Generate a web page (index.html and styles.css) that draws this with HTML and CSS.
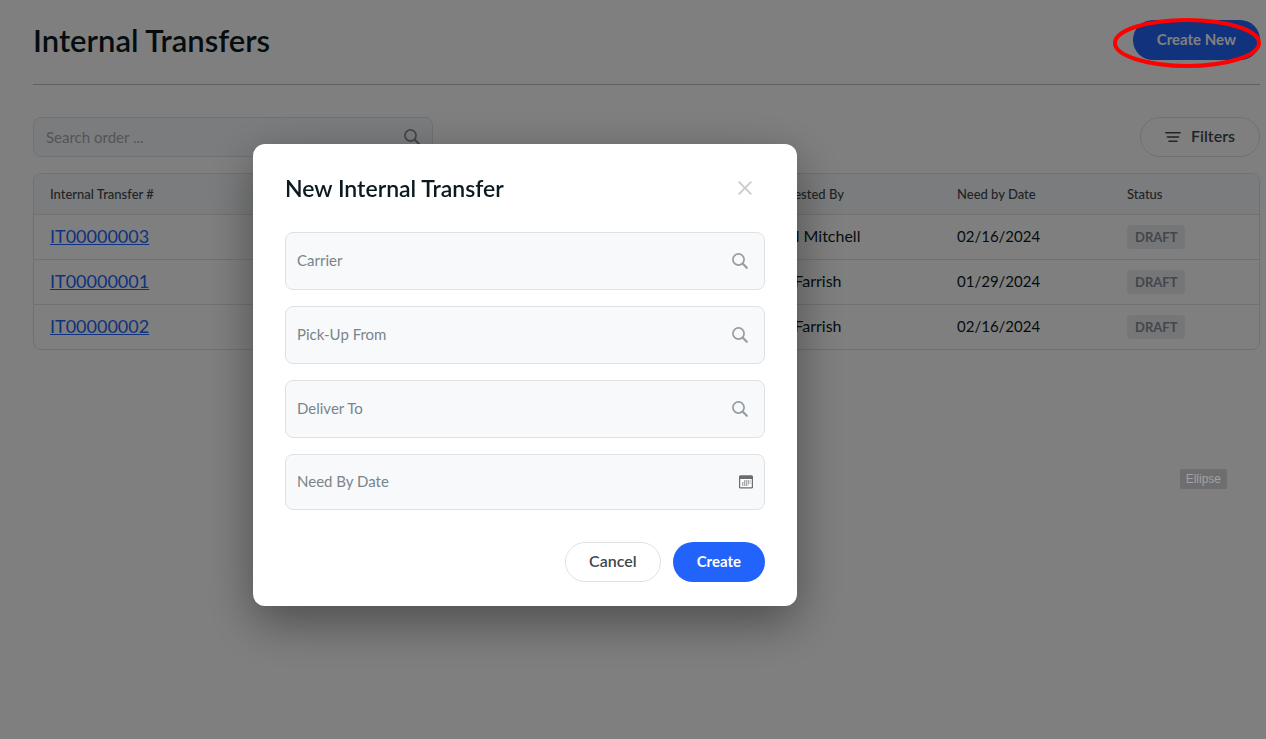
FILE: index.html
```
<!DOCTYPE html>
<html lang="en">
<head>
    <meta charset="UTF-8">
    <meta name="viewport" content="width=device-width, initial-scale=1.0">
    <title>Internal Transfers</title>
    <link rel="stylesheet" href="styles.css">
</head>
<body>
    <svg class="sprite" aria-hidden="true">
        <symbol id="icon-search" viewBox="0 0 16 16">
            <circle cx="6.5" cy="6.5" r="5.6" fill="none" stroke="currentColor" stroke-width="1.7"/>
            <path d="M10.8 10.8L14.8 14.8" fill="none" stroke="currentColor" stroke-width="2.2" stroke-linecap="round"/>
        </symbol>
    </svg>

    <main class="page">
        <header class="page-header">
            <h1>Internal Transfers</h1>
            <button class="btn btn-primary">Create New</button>
        </header>

        <div class="toolbar">
            <div class="search">
                <input type="text" placeholder="Search order ..." aria-label="Search order">
                <svg class="icon"><use href="#icon-search"/></svg>
            </div>
            <button class="btn btn-outline">
                <svg class="icon" viewBox="0 0 16 16" fill="none" stroke="currentColor" stroke-width="1.5" stroke-linecap="round">
                    <path d="M.8 4.8H15.2M2.4 9H13.6M4 13.2H12"/>
                </svg>
                Filters
            </button>
        </div>

        <div class="table-wrap">
            <table>
                <colgroup>
                    <col class="col-number">
                    <col class="col-requested">
                    <col class="col-date">
                    <col class="col-status">
                </colgroup>
                <thead>
                    <tr>
                        <th>Internal Transfer #</th>
                        <th>Requested By</th>
                        <th>Need by Date</th>
                        <th>Status</th>
                    </tr>
                </thead>
                <tbody>
                    <tr>
                        <td><a href="#">IT00000003</a></td>
                        <td>Todd Mitchell</td>
                        <td class="date">02/16/2024</td>
                        <td><span class="badge">DRAFT</span></td>
                    </tr>
                    <tr>
                        <td><a href="#">IT00000001</a></td>
                        <td>Jeff Farrish</td>
                        <td class="date">01/29/2024</td>
                        <td><span class="badge">DRAFT</span></td>
                    </tr>
                    <tr>
                        <td><a href="#">IT00000002</a></td>
                        <td>Jeff Farrish</td>
                        <td class="date">02/16/2024</td>
                        <td><span class="badge">DRAFT</span></td>
                    </tr>
                </tbody>
            </table>
        </div>
    </main>

    <div class="overlay">
        <form class="modal" role="dialog" aria-labelledby="modal-title">
            <div class="modal-header">
                <h2 id="modal-title">New Internal Transfer</h2>
                <button type="button" class="close" aria-label="Close">
                    <svg width="14" height="14" viewBox="0 0 14 14" stroke="currentColor" stroke-width="1.8">
                        <path d="M.7 .7L13.3 13.3M13.3 .7L.7 13.3"/>
                    </svg>
                </button>
            </div>

            <div class="fields">
                <div class="field">
                    <label for="carrier">Carrier</label>
                    <input type="text" id="carrier">
                    <svg class="icon"><use href="#icon-search"/></svg>
                </div>
                <div class="field">
                    <label for="pickup">Pick-Up From</label>
                    <input type="text" id="pickup">
                    <svg class="icon"><use href="#icon-search"/></svg>
                </div>
                <div class="field">
                    <label for="deliver">Deliver To</label>
                    <input type="text" id="deliver">
                    <svg class="icon"><use href="#icon-search"/></svg>
                </div>
                <div class="field field-date">
                    <label for="need-by">Need By Date</label>
                    <input type="text" id="need-by">
                    <svg class="icon-calendar" viewBox="0 0 14 14">
                        <rect x=".6" y="1.1" width="12.8" height="11.8" rx="1" fill="#fff" stroke="#6b6b70" stroke-width="1.3"/>
                        <path d="M0 2a1.5 1.5 0 0 1 1.5-1.5h11A1.5 1.5 0 0 1 14 2v2H0z" fill="#6b6b70"/>
                        <path d="M5 6H11.4M3 8H11.4M3 10H9.4" stroke="#8f8f94" stroke-width="1.3" stroke-dasharray="1.4 .6"/>
                    </svg>
                </div>
            </div>

            <div class="modal-footer">
                <button type="button" class="btn btn-outline">Cancel</button>
                <button type="submit" class="btn btn-primary">Create</button>
            </div>
        </form>
    </div>

    <svg class="marker" viewBox="0 0 148 50" aria-hidden="true">
        <ellipse cx="74" cy="25" rx="72" ry="23" fill="none" stroke="#ff0000" stroke-width="4"/>
    </svg>
    <span class="tooltip">Ellipse</span>
</body>
</html>
```

FILE: styles.css
```
* {
    box-sizing: border-box;
}

body {
    margin: 0;
    min-height: 100vh;
    position: relative;
    background-color: #fff;
    color: #0b1a20;
    font-family: Lato, "Liberation Sans", sans-serif;
    font-size: 16px;
    line-height: 24px;
}

h1, h2 {
    margin: 0;
    font-weight: 600;
}

h1 {
    font-size: 31px;
    line-height: 40px;
}

h2 {
    font-size: 23px;
    line-height: 32px;
}

input {
    min-width: 0;
    flex: 1;
    border: none;
    outline: none;
    padding: 0;
    background: none;
    font: inherit;
    color: inherit;
}

.sprite {
    display: none;
}

.icon {
    width: 16px;
    height: 16px;
    flex: none;
}

.page {
    padding: 20px 6px 0 33px;
}

.page-header {
    display: flex;
    justify-content: space-between;
    align-items: center;
    padding-bottom: 24px;
    border-bottom: 1px solid #c0c3d0;
}

/* buttons */
.btn {
    display: inline-flex;
    align-items: center;
    justify-content: center;
    gap: 10px;
    height: 40px;
    padding: 0 24px 2px;
    border: none;
    border-radius: 20px;
    font: inherit;
    cursor: pointer;
}

.btn-primary {
    background-color: #2264fb;
    color: #fff;
    font-size: 15px;
    font-weight: 700;
}

.btn-outline {
    background-color: #fff;
    border: 1px solid #dee2e4;
    color: #40484e;
    font-weight: 600;
}

.modal-footer .btn-outline {
    padding: 0 23px 2px;
}

.toolbar {
    display: flex;
    justify-content: space-between;
    margin: 32px 0 16px;
}

.search {
    display: flex;
    align-items: center;
    width: 400px;
    height: 40px;
    padding: 0 12px;
    background-color: #f7f9fb;
    border: 1px solid #dee2e6;
    border-radius: 8px;
    color: #868e94;
    font-size: 15px;
}

.search input::placeholder {
    color: #a4abb0;
    opacity: 1;
}

/* transfers table */
.table-wrap {
    border: 1px solid #dee2e4;
    border-radius: 8px;
    overflow: hidden;
}

table {
    width: 100%;
    table-layout: fixed;
    border-collapse: separate;
    border-spacing: 0;
}

.col-requested {
    width: 192px;
}

.col-date {
    width: 170px;
}

.col-status {
    width: 148px;
}

th, td {
    padding: 0 16px;
    text-align: left;
    white-space: nowrap;
}

th {
    height: 41px;
    background-color: #f7f9fb;
    border-bottom: 1px solid #dee2e4;
    font-size: 13px;
    font-weight: 500;
    color: #40484e;
}

td {
    height: 45px;
    padding-bottom: 2px;
    border-bottom: 1px solid #dee2e4;
}

tr:last-child td {
    height: 44px;
    border-bottom: none;
}

td a {
    color: #2264fb;
    font-size: 18px;
    text-decoration-thickness: 1px;
}

.date {
    font-size: 15px;
}

.badge {
    display: inline-block;
    padding: 0 8px;
    background-color: #e9edf0;
    border-radius: 4px;
    color: #868e94;
    font-size: 13px;
    font-weight: 700;
}

.overlay {
    position: fixed;
    inset: 0;
    display: flex;
    justify-content: center;
    align-items: flex-start;
    padding: 144px 216px 0 0;
    background-color: rgba(0, 0, 0, 0.5);
}

.modal {
    width: 544px;
    padding: 24px 32px;
    background-color: #fff;
    border-radius: 12px;
    box-shadow: 0 16px 48px rgba(0, 0, 0, 0.4);
}

.modal-header {
    display: flex;
    justify-content: space-between;
    align-items: center;
    height: 40px;
    padding-right: 8px;
}

.close {
    display: flex;
    align-items: center;
    justify-content: center;
    width: 24px;
    height: 24px;
    padding: 0;
    border: none;
    background: none;
    color: #c8cacc;
    cursor: pointer;
}

.fields {
    display: grid;
    gap: 16px;
    margin: 24px 0 32px;
}

.field {
    display: flex;
    align-items: center;
    gap: 8px;
    height: 58px;
    padding: 0 16px 0 11px;
    background-color: #f7f9fb;
    border: 1px solid #dee2e4;
    border-radius: 8px;
    color: #7b848a;
    font-size: 15px;
}

.field label {
    padding-bottom: 2px;
}

.field .icon {
    color: #959ea4;
}

.field-date {
    height: 56px;
    padding-right: 11px;
}

.icon-calendar {
    width: 14px;
    height: 14px;
}

.modal-footer {
    display: flex;
    justify-content: flex-end;
    gap: 12px;
}

/* red marker round the create button */
.marker {
    position: absolute;
    top: 18px;
    right: 5px;
    width: 148px;
    height: 50px;
}

.tooltip {
    position: absolute;
    top: 469px;
    right: 39px;
    padding: 0 6px;
    background-color: #6e6e6e;
    border-radius: 2px;
    color: #a2a2a2;
    font-family: "Liberation Sans", Arial, sans-serif;
    font-size: 12px;
    line-height: 20px;
}
```
